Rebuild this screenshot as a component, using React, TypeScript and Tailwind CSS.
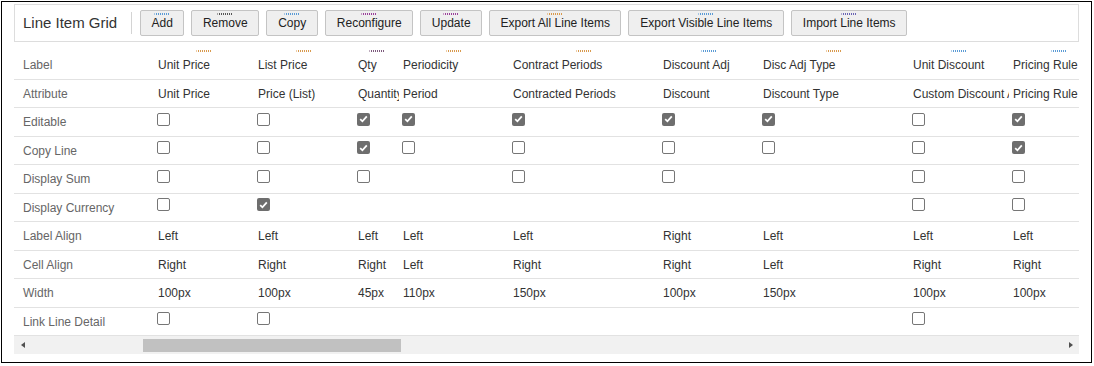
import * as React from "react"

type Mark = "blue" | "gray" | "purple" | "orange" | "violet" | "plum"

const markCls: Record<Mark, string> = {
  blue: "bg-[repeating-linear-gradient(90deg,#5b9bd5_0_1px,transparent_1px_2px)]",
  gray: "bg-[repeating-linear-gradient(90deg,#555555_0_1px,transparent_1px_2px)]",
  purple: "bg-[repeating-linear-gradient(90deg,#9b3f9b_0_1px,transparent_1px_2px)]",
  orange: "bg-[repeating-linear-gradient(90deg,#d99a4e_0_1px,transparent_1px_2px)]",
  violet: "bg-[repeating-linear-gradient(90deg,#6a64b4_0_1px,transparent_1px_2px)]",
  plum: "bg-[repeating-linear-gradient(90deg,#7d5a7d_0_1px,transparent_1px_2px)]",
}

function Dots({ color, className }: { color: Mark; className: string }) {
  return <div className={`absolute left-1/2 h-[2px] w-[15px] -translate-x-1/2 ${markCls[color]} ${className}`} />
}

const buttons: { label: string; w: string; mark: Mark }[] = [
  { label: "Add", w: "w-[44px]", mark: "blue" },
  { label: "Remove", w: "w-[68px]", mark: "gray" },
  { label: "Copy", w: "w-[52px]", mark: "blue" },
  { label: "Reconfigure", w: "w-[88px]", mark: "purple" },
  { label: "Update", w: "w-[62px]", mark: "purple" },
  { label: "Export All Line Items", w: "w-[132px]", mark: "orange" },
  { label: "Export Visible Line Items", w: "w-[156px]", mark: "blue" },
  { label: "Import Line Items", w: "w-[116px]", mark: "violet" },
]

type Col = {
  label: string
  w: string
  mark: Mark
  attr: string
  editable?: boolean
  copy?: boolean
  sum?: boolean
  currency?: boolean
  labelAlign: string
  cellAlign: string
  width: string
  link?: boolean
}

const columns: Col[] = [
  { label: "Unit Price", w: "w-[100px]", mark: "orange", attr: "Unit Price", editable: false, copy: false, sum: false, currency: false, labelAlign: "Left", cellAlign: "Right", width: "100px", link: false },
  { label: "List Price", w: "w-[100px]", mark: "orange", attr: "Price (List)", editable: false, copy: false, sum: false, currency: true, labelAlign: "Left", cellAlign: "Right", width: "100px", link: false },
  { label: "Qty", w: "w-[45px]", mark: "plum", attr: "Quantity", editable: true, copy: true, sum: false, labelAlign: "Left", cellAlign: "Right", width: "45px" },
  { label: "Periodicity", w: "w-[110px]", mark: "orange", attr: "Period", editable: true, copy: false, labelAlign: "Left", cellAlign: "Left", width: "110px" },
  { label: "Contract Periods", w: "w-[150px]", mark: "orange", attr: "Contracted Periods", editable: true, copy: false, sum: false, labelAlign: "Left", cellAlign: "Right", width: "150px" },
  { label: "Discount Adj", w: "w-[100px]", mark: "blue", attr: "Discount", editable: true, copy: false, sum: false, labelAlign: "Right", cellAlign: "Right", width: "100px" },
  { label: "Disc Adj Type", w: "w-[150px]", mark: "orange", attr: "Discount Type", editable: true, copy: false, labelAlign: "Left", cellAlign: "Left", width: "150px" },
  { label: "Unit Discount", w: "w-[100px]", mark: "blue", attr: "Custom Discount Amount", editable: false, copy: false, sum: false, currency: false, labelAlign: "Left", cellAlign: "Right", width: "100px", link: false },
  { label: "Pricing Rule", w: "w-[100px]", mark: "blue", attr: "Pricing Rule", editable: true, copy: true, sum: false, currency: false, labelAlign: "Left", cellAlign: "Right", width: "100px" },
]

function Check({ checked }: { checked?: boolean }) {
  if (checked === undefined) return null
  if (checked) {
    return (
      <span className="mb-[6px] -ml-px flex h-[13px] w-[13px] items-center justify-center rounded-[2px] bg-[#6e6e6e]">
        <svg width="9" height="8" viewBox="0 0 9 8">
          <path d="M1.2 4.2 L3.4 6.3 L7.8 1.3" fill="none" stroke="#ffffff" strokeWidth="1.8" />
        </svg>
      </span>
    )
  }
  return <span className="mb-[6px] -ml-px block h-[13px] w-[13px] rounded-[2px] border border-[#767676] bg-white" />
}

type Row = { label: string; h: string; cell: (c: Col) => React.ReactNode }

const text = (v: string) => <span className="text-[#333333]">{v}</span>

const rows: Row[] = [
  { label: "Attribute", h: "h-[28px]", cell: (c) => text(c.attr) },
  { label: "Editable", h: "h-[29px]", cell: (c) => <Check checked={c.editable} /> },
  { label: "Copy Line", h: "h-[28px]", cell: (c) => <Check checked={c.copy} /> },
  { label: "Display Sum", h: "h-[29px]", cell: (c) => <Check checked={c.sum} /> },
  { label: "Display Currency", h: "h-[28px]", cell: (c) => <Check checked={c.currency} /> },
  { label: "Label Align", h: "h-[29px]", cell: (c) => text(c.labelAlign) },
  { label: "Cell Align", h: "h-[28px]", cell: (c) => text(c.cellAlign) },
  { label: "Width", h: "h-[29px]", cell: (c) => text(c.width) },
  { label: "Link Line Detail", h: "h-[28px]", cell: (c) => <Check checked={c.link} /> },
]

export default function App() {
  return (
    <div className="ml-px mt-px h-[362px] w-[1091px] overflow-hidden border border-black bg-white pl-[12px] pt-[2px] font-['Liberation_Sans',Arial,sans-serif] text-[12px]">
      <div className="flex h-[38px] w-[1065px] items-center border border-[#dddddd] pl-[8px]">
        <span className="text-[15px] text-[#333333]">Line Item Grid</span>
        <div className="ml-[14px] h-[22px] w-px bg-[#d4d4d4]" />
        <div className="ml-[8px] flex gap-[7px]">
          {buttons.map((b) => (
            <button
              key={b.label}
              className={`relative flex h-[26px] ${b.w} items-center justify-center rounded-[2px] border border-[#c4c4c4] bg-[#efefef] text-[12px] text-[#222222]`}
            >
              <Dots color={b.mark} className="top-[2px]" />
              {b.label}
            </button>
          ))}
        </div>
      </div>

      <div className="w-[1065px] overflow-hidden">
        <div className="flex h-[38px] w-max items-center border-b border-[#e2e2e2] pt-[8px]">
          <div className="w-[140px] shrink-0 pl-[9px] text-[#666666]">Label</div>
          {columns.map((c) => (
            <div key={c.label} className={`relative h-full ${c.w} flex shrink-0 items-center overflow-hidden whitespace-nowrap pl-[4px] text-[#333333]`}>
              <Dots color={c.mark} className="top-0" />
              {c.label}
            </div>
          ))}
        </div>
        {rows.map((r) => (
          <div key={r.label} className={`flex ${r.h} w-max items-center border-b border-[#e2e2e2]`}>
            <div className="w-[140px] shrink-0 pl-[9px] text-[#666666]">{r.label}</div>
            {columns.map((c) => (
              <div key={c.label} className={`${c.w} flex h-full shrink-0 items-center overflow-hidden whitespace-nowrap pl-[4px]`}>
                {r.cell(c)}
              </div>
            ))}
          </div>
        ))}

        <div className="relative h-[18px] bg-[#f1f1f1] pl-[129px] pt-[3px]">
          <div className="h-[13px] w-[258px] bg-[#c1c1c1]" />
          <div className="absolute left-[7px] top-[6px] h-0 w-0 border-y-[3.5px] border-r-[4px] border-y-transparent border-r-[#505050]" />
          <div className="absolute right-[6px] top-[6px] h-0 w-0 border-y-[3.5px] border-l-[4px] border-y-transparent border-l-[#505050]" />
        </div>
      </div>
    </div>
  )
}
